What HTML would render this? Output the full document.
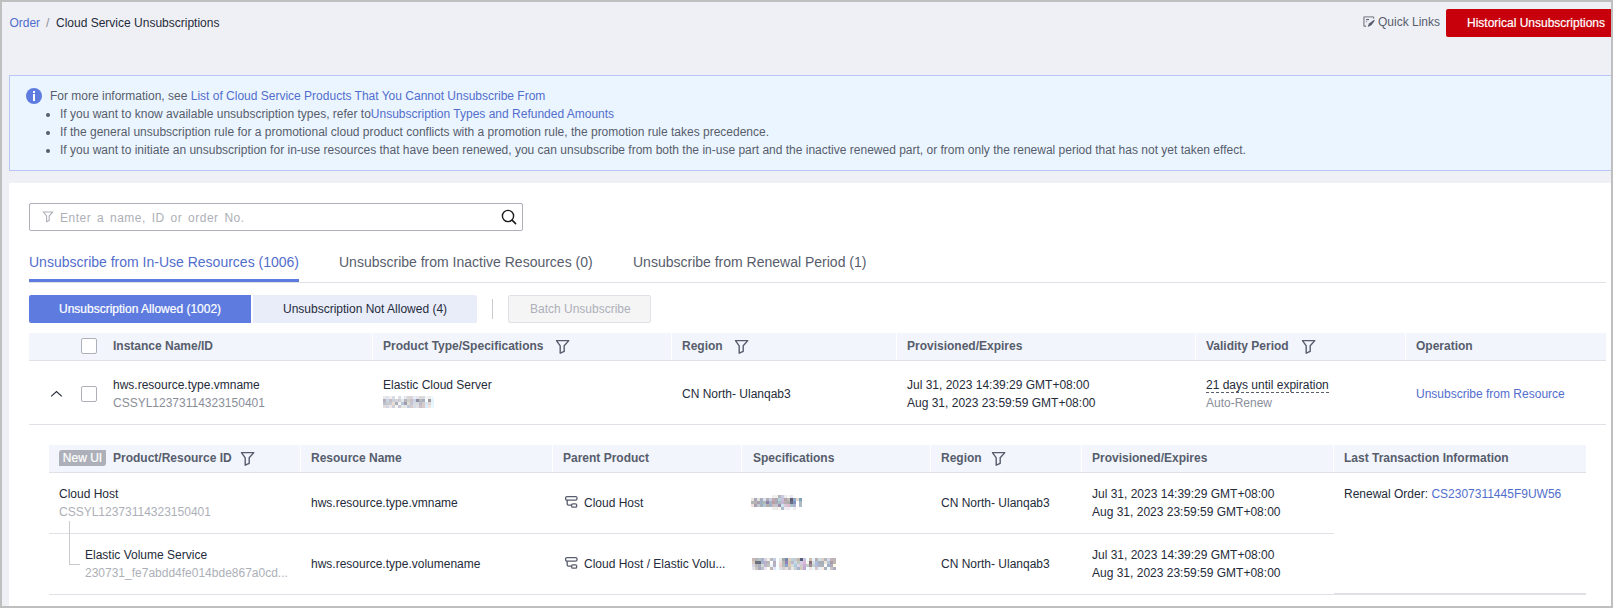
<!DOCTYPE html>
<html><head><meta charset="utf-8">
<style>
*{margin:0;padding:0;box-sizing:border-box}
html,body{width:1613px;height:608px;overflow:hidden;background:#bfbfbf}
body{font-family:"Liberation Sans",sans-serif;font-size:12px;color:#252b3a;position:relative}
.a{position:absolute;white-space:nowrap;line-height:18px}
#page{position:absolute;left:2px;top:2px;width:1609px;height:604px;background:#eff0f5;overflow:hidden}
.lnk{color:#526ecc}
.g{color:#575d6c}
.lg{color:#8a8e99}
.llg{color:#adb0b8}
.b{font-weight:bold}
svg{position:absolute;overflow:visible}
.hdr{position:absolute;background:#f2f5fc;border-bottom:1px solid #dfe1e6}
.sep{position:absolute;width:1px;background:#fff}
.hline{position:absolute;height:1px;background:#dfe1e6}
.cb{position:absolute;width:16px;height:16px;border:1px solid #adb0b8;border-radius:2px;background:#fff}
</style></head><body>
<div id="page"></div>

<!-- breadcrumb -->
<div class="a lnk" style="left:9.4px;top:14px">Order</div>
<div class="a lg" style="left:46px;top:14px">/</div>
<div class="a" style="left:56px;top:14px">Cloud Service Unsubscriptions</div>

<!-- quick links -->
<svg style="left:1362px;top:15px" width="14" height="13" viewBox="0 0 14 13">
 <path d="M11.6 3.8V2.5Q11.6 1.9 11 1.9H2.5Q1.9 1.9 1.9 2.5V10.6Q1.9 11.3 2.5 11.3H4.2" fill="none" stroke="#8a8e99" stroke-width="1.4"/>
 <path d="M4 4.6H7" stroke="#575d6c" stroke-width="1.1"/>
 <path d="M4.5 6.1V7.3" stroke="#8a8e99" stroke-width="1.1"/>
 <path d="M5.6 12L7 8.6L11.4 5.3Q12.9 4.4 12.7 5.7L9.4 10.2Z" fill="#575d6c"/>
</svg>
<div class="a g" style="left:1378px;top:13px">Quick Links</div>

<!-- red button -->
<div style="position:absolute;left:1446px;top:9px;width:180px;height:28px;background:#c7000b;border-radius:2px"></div>
<div class="a" style="left:1467px;top:14px;color:#fff;-webkit-text-stroke:0.2px #fff">Historical Unsubscriptions</div>

<!-- info box -->
<div style="position:absolute;left:9px;top:75px;width:1610px;height:96px;background:#ebf5ff;border:1px solid #b9c6f5"></div>
<div style="position:absolute;left:26px;top:88px;width:16px;height:16px;border-radius:50%;background:#5e7ce0"></div>
<div style="position:absolute;left:33px;top:91px;width:2px;height:2px;background:#fff"></div>
<div style="position:absolute;left:33px;top:94px;width:2px;height:7px;background:#fff"></div>
<div class="a g" style="left:50px;top:87px">For more information, see <span class="lnk">List of Cloud Service Products That You Cannot Unsubscribe From</span></div>
<div style="position:absolute;left:46px;top:113px;width:4px;height:4px;border-radius:50%;background:#575d6c"></div>
<div style="position:absolute;left:46px;top:131px;width:4px;height:4px;border-radius:50%;background:#575d6c"></div>
<div style="position:absolute;left:46px;top:149px;width:4px;height:4px;border-radius:50%;background:#575d6c"></div>
<div class="a g" style="left:60px;top:105px">If you want to know available unsubscription types, refer to<span class="lnk">Unsubscription Types and Refunded Amounts</span></div>
<div class="a g" style="left:60px;top:123px">If the general unsubscription rule for a promotional cloud product conflicts with a promotion rule, the promotion rule takes precedence.</div>
<div class="a g" style="left:60px;top:141px">If you want to initiate an unsubscription for in-use resources that have been renewed, you can unsubscribe from both the in-use part and the inactive renewed part, or from only the renewal period that has not yet taken effect.</div>

<!-- white panel -->
<div style="position:absolute;left:9px;top:183px;width:1602px;height:423px;background:#fff"></div>


<!-- search -->
<div style="position:absolute;left:29px;top:203px;width:494px;height:28px;border:1px solid #adb0b8;border-radius:2px;background:#fff"></div>
<svg style="left:42px;top:211px" width="12" height="12" viewBox="0 0 12 12">
 <path d="M1.2 1H10.8L7.2 4.8V9.4L4.6 10.8V4.8Z" fill="none" stroke="#adb0b8" stroke-width="1.1" stroke-linejoin="round"/>
</svg>
<div class="a llg" style="left:60px;top:209px;word-spacing:2px;letter-spacing:0.5px">Enter a name, ID or order No.</div>
<svg style="left:500px;top:208px" width="18" height="18" viewBox="0 0 18 18">
 <circle cx="8" cy="8" r="5.6" fill="none" stroke="#191919" stroke-width="1.4"/>
 <path d="M12.1 12.1L15.6 15.6" stroke="#191919" stroke-width="1.5" stroke-linecap="round"/>
</svg>

<!-- tabs -->
<div class="a" style="left:29px;top:252px;font-size:14px;line-height:20px;color:#526ecc">Unsubscribe from In-Use Resources (1006)</div>
<div class="a g" style="left:339px;top:252px;font-size:14px;line-height:20px">Unsubscribe from Inactive Resources (0)</div>
<div class="a g" style="left:633px;top:252px;font-size:14px;line-height:20px">Unsubscribe from Renewal Period (1)</div>
<div class="hline" style="left:29px;top:282px;width:1577px"></div>
<div style="position:absolute;left:29px;top:279px;width:270px;height:3px;background:#5e7ce0"></div>

<!-- segmented buttons -->
<div style="position:absolute;left:29px;top:295px;width:222px;height:28px;background:#5e7ce0;border-radius:2px 0 0 2px"></div>
<div class="a" style="left:59px;top:300px;color:#fff;width:162px;text-align:center;-webkit-text-stroke:0.2px #fff">Unsubscription Allowed (1002)</div>
<div style="position:absolute;left:253px;top:295px;width:224px;height:28px;background:#e9edfa;border-radius:0 2px 2px 0"></div>
<div class="a" style="left:283px;top:300px">Unsubscription Not Allowed (4)</div>
<div style="position:absolute;left:492px;top:299px;width:1px;height:20px;background:#c8cad0"></div>
<div style="position:absolute;left:508px;top:295px;width:143px;height:28px;background:#f5f5f6;border:1px solid #dfe1e6;border-radius:2px"></div>
<div class="a llg" style="left:530px;top:300px">Batch Unsubscribe</div>


<!-- main table header -->
<div class="hdr" style="left:29px;top:333px;width:1577px;height:28px"></div>
<div class="sep" style="left:372px;top:333px;height:27px"></div>
<div class="sep" style="left:671px;top:333px;height:27px"></div>
<div class="sep" style="left:896px;top:333px;height:27px"></div>
<div class="sep" style="left:1195px;top:333px;height:27px"></div>
<div class="sep" style="left:1405px;top:333px;height:27px"></div>
<div class="cb" style="left:81px;top:338px"></div>
<div class="a g b" style="left:113px;top:337px">Instance Name/ID</div>
<div class="a g b" style="left:383px;top:337px">Product Type/Specifications</div>
<svg class="flt" style="left:554px;top:339px" width="16" height="16" viewBox="0 0 16 16"><path d="M2.5 1.6H14.8L10.2 6.8V12.3L6.2 14.2V6.8Z" fill="none" stroke="#575d6c" stroke-width="1.4" stroke-linejoin="round"/></svg>
<div class="a g b" style="left:682px;top:337px">Region</div>
<svg class="flt" style="left:733px;top:339px" width="16" height="16" viewBox="0 0 16 16"><path d="M2.5 1.6H14.8L10.2 6.8V12.3L6.2 14.2V6.8Z" fill="none" stroke="#575d6c" stroke-width="1.4" stroke-linejoin="round"/></svg>
<div class="a g b" style="left:907px;top:337px">Provisioned/Expires</div>
<div class="a g b" style="left:1206px;top:337px">Validity Period</div>
<svg class="flt" style="left:1300px;top:339px" width="16" height="16" viewBox="0 0 16 16"><path d="M2.5 1.6H14.8L10.2 6.8V12.3L6.2 14.2V6.8Z" fill="none" stroke="#575d6c" stroke-width="1.4" stroke-linejoin="round"/></svg>
<div class="a g b" style="left:1416px;top:337px">Operation</div>

<!-- main row -->
<svg style="left:50px;top:390px" width="13" height="8" viewBox="0 0 13 8"><path d="M1.2 6.4L6.5 1.5L11.8 6.4" fill="none" stroke="#252b3a" stroke-width="1.1"/></svg>
<div class="cb" style="left:81px;top:386px"></div>
<div class="a" style="left:113px;top:376px">hws.resource.type.vmname</div>
<div class="a lg" style="left:113px;top:394px">CSSYL12373114323150401</div>
<div class="a" style="left:383px;top:376px">Elastic Cloud Server</div>
<svg style="left:383px;top:396px" width="51" height="12" shape-rendering="crispEdges"><rect x="0" y="0" width="3" height="3" fill="#ebe7e9"/><rect x="3" y="0" width="3" height="3" fill="#dfe3ed"/><rect x="6" y="0" width="3" height="3" fill="#f7efee"/><rect x="9" y="0" width="3" height="3" fill="#d7dde8"/><rect x="12" y="0" width="3" height="3" fill="#fdfdf9"/><rect x="15" y="0" width="3" height="3" fill="#dedce4"/><rect x="18" y="0" width="3" height="3" fill="#f5faff"/><rect x="21" y="0" width="3" height="3" fill="#e8e6ed"/><rect x="24" y="0" width="3" height="3" fill="#d9d5d8"/><rect x="27" y="0" width="3" height="3" fill="#d9d5d8"/><rect x="30" y="0" width="3" height="3" fill="#e6eefb"/><rect x="33" y="0" width="3" height="3" fill="#e6e5ee"/><rect x="36" y="0" width="3" height="3" fill="#dedad9"/><rect x="39" y="0" width="3" height="3" fill="#d8d8dd"/><rect x="42" y="0" width="3" height="3" fill="#f2f5fc"/><rect x="45" y="0" width="3" height="3" fill="#f0eceb"/><rect x="48" y="0" width="3" height="3" fill="#f2fbff"/><rect x="0" y="3" width="3" height="3" fill="#b4b1ba"/><rect x="3" y="3" width="3" height="3" fill="#ccd6e5"/><rect x="6" y="3" width="3" height="3" fill="#c3bfc4"/><rect x="9" y="3" width="3" height="3" fill="#ccd2dc"/><rect x="12" y="3" width="3" height="3" fill="#d6d4d8"/><rect x="15" y="3" width="3" height="3" fill="#cfcdd6"/><rect x="18" y="3" width="3" height="3" fill="#e3e7ec"/><rect x="21" y="3" width="3" height="3" fill="#b7b5c0"/><rect x="24" y="3" width="3" height="3" fill="#ccd0c9"/><rect x="27" y="3" width="3" height="3" fill="#cbc1c9"/><rect x="30" y="3" width="3" height="3" fill="#ccd3e0"/><rect x="33" y="3" width="3" height="3" fill="#8e8ea0"/><rect x="36" y="3" width="3" height="3" fill="#b4b9bf"/><rect x="39" y="3" width="3" height="3" fill="#a8b1c2"/><rect x="42" y="3" width="3" height="3" fill="#fbfbfb"/><rect x="45" y="3" width="3" height="3" fill="#9c989c"/><rect x="48" y="3" width="3" height="3" fill="#e5f5ff"/><rect x="0" y="6" width="3" height="3" fill="#bcc1d2"/><rect x="3" y="6" width="3" height="3" fill="#c8cbd0"/><rect x="6" y="6" width="3" height="3" fill="#c7cdd2"/><rect x="9" y="6" width="3" height="3" fill="#eadbcc"/><rect x="12" y="6" width="3" height="3" fill="#a8adc0"/><rect x="15" y="6" width="3" height="3" fill="#f2f5ef"/><rect x="18" y="6" width="3" height="3" fill="#b8c5d8"/><rect x="21" y="6" width="3" height="3" fill="#9b9dae"/><rect x="24" y="6" width="3" height="3" fill="#e0dcd3"/><rect x="27" y="6" width="3" height="3" fill="#c5c3d6"/><rect x="30" y="6" width="3" height="3" fill="#d7dbe6"/><rect x="33" y="6" width="3" height="3" fill="#d5dadf"/><rect x="36" y="6" width="3" height="3" fill="#bcbac6"/><rect x="39" y="6" width="3" height="3" fill="#d9ccc9"/><rect x="42" y="6" width="3" height="3" fill="#d5e6f9"/><rect x="45" y="6" width="3" height="3" fill="#e3d6d3"/><rect x="48" y="6" width="3" height="3" fill="#e6f6ff"/><rect x="0" y="9" width="3" height="3" fill="#e3dad9"/><rect x="3" y="9" width="3" height="3" fill="#d2d9e4"/><rect x="6" y="9" width="3" height="3" fill="#efe7e7"/><rect x="9" y="9" width="3" height="3" fill="#cfcfdd"/><rect x="12" y="9" width="3" height="3" fill="#f4f7f0"/><rect x="15" y="9" width="3" height="3" fill="#cbc7d9"/><rect x="18" y="9" width="3" height="3" fill="#e4e6e1"/><rect x="21" y="9" width="3" height="3" fill="#e6e6e8"/><rect x="24" y="9" width="3" height="3" fill="#c1cbdb"/><rect x="27" y="9" width="3" height="3" fill="#d8ccc9"/><rect x="30" y="9" width="3" height="3" fill="#d7dbe6"/><rect x="33" y="9" width="3" height="3" fill="#e0e0e5"/><rect x="36" y="9" width="3" height="3" fill="#c8c1c7"/><rect x="39" y="9" width="3" height="3" fill="#d6cacb"/><rect x="42" y="9" width="3" height="3" fill="#dcebfb"/><rect x="45" y="9" width="3" height="3" fill="#ede3df"/><rect x="48" y="9" width="3" height="3" fill="#ecf8ff"/></svg>
<div class="a" style="left:682px;top:385px">CN North- Ulanqab3</div>
<div class="a" style="left:907px;top:376px">Jul 31, 2023 14:39:29 GMT+08:00</div>
<div class="a" style="left:907px;top:394px">Aug 31, 2023 23:59:59 GMT+08:00</div>
<div class="a" style="left:1206px;top:376px">21 days until expiration</div>
<div style="position:absolute;left:1206px;top:392px;width:123px;height:1px;background:repeating-linear-gradient(90deg,#575d6c 0 3px,transparent 3px 5px)"></div>
<div class="a lg" style="left:1206px;top:394px">Auto-Renew</div>
<div class="a lnk" style="left:1416px;top:385px">Unsubscribe from Resource</div>
<div class="hline" style="left:29px;top:424px;width:1577px"></div>


<!-- sub table header -->
<div class="hdr" style="left:49px;top:445px;width:1537px;height:28px"></div>
<div class="sep" style="left:300px;top:445px;height:27px"></div>
<div class="sep" style="left:552px;top:445px;height:27px"></div>
<div class="sep" style="left:741px;top:445px;height:27px"></div>
<div class="sep" style="left:930px;top:445px;height:27px"></div>
<div class="sep" style="left:1081px;top:445px;height:27px"></div>
<div class="sep" style="left:1333px;top:445px;height:27px"></div>
<div style="position:absolute;left:59px;top:450px;width:47px;height:16px;background:#adb0b8;border-radius:3px 0 3px 0"></div>
<div class="a" style="left:59px;top:449px;width:47px;text-align:center;color:#fff;-webkit-text-stroke:0.2px #fff">New UI</div>
<div class="a g b" style="left:113px;top:449px">Product/Resource ID</div>
<svg style="left:239px;top:451px" width="16" height="16" viewBox="0 0 16 16"><path d="M2.5 1.6H14.8L10.2 6.8V12.3L6.2 14.2V6.8Z" fill="none" stroke="#575d6c" stroke-width="1.4" stroke-linejoin="round"/></svg>
<div class="a g b" style="left:311px;top:449px">Resource Name</div>
<div class="a g b" style="left:563px;top:449px">Parent Product</div>
<div class="a g b" style="left:753px;top:449px">Specifications</div>
<div class="a g b" style="left:941px;top:449px">Region</div>
<svg style="left:990px;top:451px" width="16" height="16" viewBox="0 0 16 16"><path d="M2.5 1.6H14.8L10.2 6.8V12.3L6.2 14.2V6.8Z" fill="none" stroke="#575d6c" stroke-width="1.4" stroke-linejoin="round"/></svg>
<div class="a g b" style="left:1092px;top:449px">Provisioned/Expires</div>
<div class="a g b" style="left:1344px;top:449px">Last Transaction Information</div>

<!-- sub row 1 -->
<div class="a" style="left:59px;top:485px">Cloud Host</div>
<div class="a llg" style="left:59px;top:503px">CSSYL12373114323150401</div>
<div class="a" style="left:311px;top:494px">hws.resource.type.vmname</div>
<svg style="left:564px;top:495px" width="14" height="14" viewBox="0 0 14 14"><g fill="none" stroke="#575d6c" stroke-width="1.3"><rect x="1.6" y="1.6" width="11.4" height="3.5" rx="1.3"/><rect x="7.6" y="8.8" width="5.1" height="3.35" rx="1.2"/><path d="M3.2 5.1V9Q3.2 10.1 4.3 10.1H7.6"/></g></svg>
<div class="a" style="left:584px;top:494px">Cloud Host</div>
<svg style="left:751px;top:495px" width="51" height="15" shape-rendering="crispEdges"><rect x="21" y="0" width="3" height="3" fill="#f0eef2"/><rect x="24" y="0" width="3" height="3" fill="#f2f1ec"/><rect x="27" y="0" width="3" height="3" fill="#b4b5bd"/><rect x="30" y="0" width="3" height="3" fill="#c7cde0"/><rect x="33" y="0" width="3" height="3" fill="#efeaf0"/><rect x="36" y="0" width="3" height="3" fill="#f8faf5"/><rect x="39" y="0" width="3" height="3" fill="#e8e6ef"/><rect x="0" y="3" width="3" height="3" fill="#eee3da"/><rect x="3" y="3" width="3" height="3" fill="#a9a7bd"/><rect x="6" y="3" width="3" height="3" fill="#dfe3dc"/><rect x="9" y="3" width="3" height="3" fill="#a9aebe"/><rect x="12" y="3" width="3" height="3" fill="#d9e2ee"/><rect x="15" y="3" width="3" height="3" fill="#b7aeb1"/><rect x="18" y="3" width="3" height="3" fill="#c5cce3"/><rect x="21" y="3" width="3" height="3" fill="#c2a9ad"/><rect x="24" y="3" width="3" height="3" fill="#acabb5"/><rect x="27" y="3" width="3" height="3" fill="#b4d3df"/><rect x="30" y="3" width="3" height="3" fill="#cbbcd8"/><rect x="33" y="3" width="3" height="3" fill="#b4a6ac"/><rect x="36" y="3" width="3" height="3" fill="#bdbdba"/><rect x="39" y="3" width="3" height="3" fill="#5f5d75"/><rect x="42" y="3" width="3" height="3" fill="#94a8c9"/><rect x="45" y="3" width="3" height="3" fill="#e6dad0"/><rect x="48" y="3" width="3" height="3" fill="#7ea2b6"/><rect x="0" y="6" width="3" height="3" fill="#b0b6b1"/><rect x="3" y="6" width="3" height="3" fill="#b8b1b2"/><rect x="6" y="6" width="3" height="3" fill="#a99fae"/><rect x="9" y="6" width="3" height="3" fill="#9fb2c1"/><rect x="12" y="6" width="3" height="3" fill="#aebab6"/><rect x="15" y="6" width="3" height="3" fill="#8a80ac"/><rect x="18" y="6" width="3" height="3" fill="#a6b2c4"/><rect x="21" y="6" width="3" height="3" fill="#bb9ea3"/><rect x="24" y="6" width="3" height="3" fill="#a8a8b8"/><rect x="27" y="6" width="3" height="3" fill="#a9bcc4"/><rect x="30" y="6" width="3" height="3" fill="#c4b4d6"/><rect x="33" y="6" width="3" height="3" fill="#b9aeb1"/><rect x="36" y="6" width="3" height="3" fill="#aeabaf"/><rect x="39" y="6" width="3" height="3" fill="#6a6b84"/><rect x="42" y="6" width="3" height="3" fill="#7f97bc"/><rect x="45" y="6" width="3" height="3" fill="#ffffff"/><rect x="48" y="6" width="3" height="3" fill="#aabac0"/><rect x="0" y="9" width="3" height="3" fill="#efdfd9"/><rect x="3" y="9" width="3" height="3" fill="#a89fb0"/><rect x="6" y="9" width="3" height="3" fill="#c5c7d0"/><rect x="9" y="9" width="3" height="3" fill="#a4afb9"/><rect x="12" y="9" width="3" height="3" fill="#b4c7db"/><rect x="15" y="9" width="3" height="3" fill="#b8b0a7"/><rect x="18" y="9" width="3" height="3" fill="#a1b1c5"/><rect x="21" y="9" width="3" height="3" fill="#cdbcbe"/><rect x="24" y="9" width="3" height="3" fill="#c4c3d1"/><rect x="27" y="9" width="3" height="3" fill="#9c8cae"/><rect x="30" y="9" width="3" height="3" fill="#cbe6ea"/><rect x="33" y="9" width="3" height="3" fill="#d6c9dc"/><rect x="36" y="9" width="3" height="3" fill="#ddbbcc"/><rect x="39" y="9" width="3" height="3" fill="#aabfc6"/><rect x="42" y="9" width="3" height="3" fill="#aeb5cc"/><rect x="45" y="9" width="3" height="3" fill="#ffffff"/><rect x="48" y="9" width="3" height="3" fill="#a9bdc3"/><rect x="21" y="12" width="3" height="3" fill="#eeeeef"/><rect x="24" y="12" width="3" height="3" fill="#ececea"/><rect x="27" y="12" width="3" height="3" fill="#fbf7ee"/><rect x="30" y="12" width="3" height="3" fill="#adbdd0"/><rect x="33" y="12" width="3" height="3" fill="#f1eef2"/><rect x="36" y="12" width="3" height="3" fill="#efe9f2"/><rect x="39" y="12" width="3" height="3" fill="#f7fdff"/><rect x="42" y="12" width="3" height="3" fill="#ededf0"/></svg>
<div class="a" style="left:941px;top:494px">CN North- Ulanqab3</div>
<div class="a" style="left:1092px;top:485px">Jul 31, 2023 14:39:29 GMT+08:00</div>
<div class="a" style="left:1092px;top:503px">Aug 31, 2023 23:59:59 GMT+08:00</div>
<div class="a" style="left:1344px;top:485px">Renewal Order: <span class="lnk">CS2307311445F9UW56</span></div>
<div class="hline" style="left:49px;top:533px;width:1285px"></div>

<!-- tree line -->
<div style="position:absolute;left:69px;top:521px;width:1px;height:44px;background:#c8cad0"></div>
<div style="position:absolute;left:69px;top:564px;width:11px;height:1px;background:#c8cad0"></div>

<!-- sub row 2 -->
<div class="a" style="left:85px;top:546px">Elastic Volume Service</div>
<div class="a llg" style="left:85px;top:564px">230731_fe7abdd4fe014bde867a0cd...</div>
<div class="a" style="left:311px;top:555px">hws.resource.type.volumename</div>
<svg style="left:564px;top:556px" width="14" height="14" viewBox="0 0 14 14"><g fill="none" stroke="#575d6c" stroke-width="1.3"><rect x="1.6" y="1.6" width="11.4" height="3.5" rx="1.3"/><rect x="7.6" y="8.8" width="5.1" height="3.35" rx="1.2"/><path d="M3.2 5.1V9Q3.2 10.1 4.3 10.1H7.6"/></g></svg>
<div class="a" style="left:584px;top:555px">Cloud Host / Elastic Volu...</div>
<svg style="left:752px;top:558px" width="84" height="12" shape-rendering="crispEdges"><rect x="0" y="0" width="3" height="3" fill="#c9b9b9"/><rect x="3" y="0" width="3" height="3" fill="#b4b6b4"/><rect x="6" y="0" width="3" height="3" fill="#b9c0c6"/><rect x="9" y="0" width="3" height="3" fill="#a9b3c9"/><rect x="12" y="0" width="3" height="3" fill="#dad3e4"/><rect x="15" y="0" width="3" height="3" fill="#f6ece6"/><rect x="18" y="0" width="3" height="3" fill="#b7bbc4"/><rect x="21" y="0" width="3" height="3" fill="#c4cde2"/><rect x="24" y="0" width="3" height="3" fill="#fcffff"/><rect x="27" y="0" width="3" height="3" fill="#e6e9e6"/><rect x="30" y="0" width="3" height="3" fill="#a3a8a8"/><rect x="33" y="0" width="3" height="3" fill="#7487b0"/><rect x="36" y="0" width="3" height="3" fill="#dfcdb8"/><rect x="39" y="0" width="3" height="3" fill="#bdd3dc"/><rect x="42" y="0" width="3" height="3" fill="#c9c9d1"/><rect x="45" y="0" width="3" height="3" fill="#c0b8ae"/><rect x="48" y="0" width="3" height="3" fill="#575e79"/><rect x="51" y="0" width="3" height="3" fill="#c9c6e0"/><rect x="54" y="0" width="3" height="3" fill="#f4ffff"/><rect x="57" y="0" width="3" height="3" fill="#d5bfae"/><rect x="60" y="0" width="3" height="3" fill="#e3f3ff"/><rect x="63" y="0" width="3" height="3" fill="#bdaeae"/><rect x="66" y="0" width="3" height="3" fill="#cddfea"/><rect x="69" y="0" width="3" height="3" fill="#dccfcc"/><rect x="72" y="0" width="3" height="3" fill="#b3b6b8"/><rect x="75" y="0" width="3" height="3" fill="#d8d9ef"/><rect x="78" y="0" width="3" height="3" fill="#bfb3b3"/><rect x="81" y="0" width="3" height="3" fill="#bdb4b9"/><rect x="0" y="3" width="3" height="3" fill="#dbc8bf"/><rect x="3" y="3" width="3" height="3" fill="#6b6f7c"/><rect x="6" y="3" width="3" height="3" fill="#6b6f7c"/><rect x="9" y="3" width="3" height="3" fill="#a4b6cf"/><rect x="12" y="3" width="3" height="3" fill="#bdafc8"/><rect x="15" y="3" width="3" height="3" fill="#b5bab8"/><rect x="18" y="3" width="3" height="3" fill="#fefefe"/><rect x="21" y="3" width="3" height="3" fill="#b6aebe"/><rect x="24" y="3" width="3" height="3" fill="#f8ffff"/><rect x="27" y="3" width="3" height="3" fill="#e6ddd6"/><rect x="30" y="3" width="3" height="3" fill="#b5bab7"/><rect x="33" y="3" width="3" height="3" fill="#8e84b8"/><rect x="36" y="3" width="3" height="3" fill="#d5c7b3"/><rect x="39" y="3" width="3" height="3" fill="#b4bccc"/><rect x="42" y="3" width="3" height="3" fill="#ccd6e2"/><rect x="45" y="3" width="3" height="3" fill="#bec7be"/><rect x="48" y="3" width="3" height="3" fill="#d2cce8"/><rect x="51" y="3" width="3" height="3" fill="#ddb8d3"/><rect x="54" y="3" width="3" height="3" fill="#f2f8f0"/><rect x="57" y="3" width="3" height="3" fill="#8b6f79"/><rect x="60" y="3" width="3" height="3" fill="#d9e0e2"/><rect x="63" y="3" width="3" height="3" fill="#a8bde2"/><rect x="66" y="3" width="3" height="3" fill="#a8aeb6"/><rect x="69" y="3" width="3" height="3" fill="#a8afb4"/><rect x="72" y="3" width="3" height="3" fill="#ece2d8"/><rect x="75" y="3" width="3" height="3" fill="#b6c6d4"/><rect x="78" y="3" width="3" height="3" fill="#ab9ba6"/><rect x="81" y="3" width="3" height="3" fill="#bdb5b0"/><rect x="0" y="6" width="3" height="3" fill="#d7d6e5"/><rect x="3" y="6" width="3" height="3" fill="#bdbab5"/><rect x="6" y="6" width="3" height="3" fill="#a8adc0"/><rect x="9" y="6" width="3" height="3" fill="#d3d8d4"/><rect x="12" y="6" width="3" height="3" fill="#bcb3cd"/><rect x="15" y="6" width="3" height="3" fill="#c3c2bf"/><rect x="18" y="6" width="3" height="3" fill="#eaf5ff"/><rect x="21" y="6" width="3" height="3" fill="#b5b2c3"/><rect x="24" y="6" width="3" height="3" fill="#f4ffff"/><rect x="27" y="6" width="3" height="3" fill="#eecfd0"/><rect x="30" y="6" width="3" height="3" fill="#b8bdb8"/><rect x="33" y="6" width="3" height="3" fill="#8ba3cc"/><rect x="36" y="6" width="3" height="3" fill="#ddc9b4"/><rect x="39" y="6" width="3" height="3" fill="#d7dadb"/><rect x="42" y="6" width="3" height="3" fill="#a8cde2"/><rect x="45" y="6" width="3" height="3" fill="#ddd3e3"/><rect x="48" y="6" width="3" height="3" fill="#cfcccc"/><rect x="51" y="6" width="3" height="3" fill="#c9acd8"/><rect x="54" y="6" width="3" height="3" fill="#c3cbc8"/><rect x="57" y="6" width="3" height="3" fill="#a38e97"/><rect x="60" y="6" width="3" height="3" fill="#c6d2d2"/><rect x="63" y="6" width="3" height="3" fill="#b8bade"/><rect x="66" y="6" width="3" height="3" fill="#b0b5bd"/><rect x="69" y="6" width="3" height="3" fill="#a9b3be"/><rect x="72" y="6" width="3" height="3" fill="#fcfdff"/><rect x="75" y="6" width="3" height="3" fill="#a4b1c2"/><rect x="78" y="6" width="3" height="3" fill="#aeaac0"/><rect x="81" y="6" width="3" height="3" fill="#fff7de"/><rect x="0" y="9" width="3" height="3" fill="#e6e4ec"/><rect x="3" y="9" width="3" height="3" fill="#ccc8c1"/><rect x="6" y="9" width="3" height="3" fill="#ada8b9"/><rect x="9" y="9" width="3" height="3" fill="#b7c1d0"/><rect x="12" y="9" width="3" height="3" fill="#f0e9f0"/><rect x="15" y="9" width="3" height="3" fill="#fefefe"/><rect x="18" y="9" width="3" height="3" fill="#c1b6b4"/><rect x="21" y="9" width="3" height="3" fill="#e2e6fb"/><rect x="24" y="9" width="3" height="3" fill="#f4ffff"/><rect x="27" y="9" width="3" height="3" fill="#dfe2e1"/><rect x="30" y="9" width="3" height="3" fill="#d0cfd6"/><rect x="33" y="9" width="3" height="3" fill="#e5ddd8"/><rect x="36" y="9" width="3" height="3" fill="#c4c0c6"/><rect x="39" y="9" width="3" height="3" fill="#e8e9e6"/><rect x="42" y="9" width="3" height="3" fill="#c3cfd3"/><rect x="45" y="9" width="3" height="3" fill="#a9b2cd"/><rect x="48" y="9" width="3" height="3" fill="#d3cac0"/><rect x="51" y="9" width="3" height="3" fill="#bfa8d3"/><rect x="54" y="9" width="3" height="3" fill="#f2ffff"/><rect x="57" y="9" width="3" height="3" fill="#f2e6e3"/><rect x="60" y="9" width="3" height="3" fill="#effaff"/><rect x="63" y="9" width="3" height="3" fill="#d5c8c6"/><rect x="66" y="9" width="3" height="3" fill="#e6f3ff"/><rect x="69" y="9" width="3" height="3" fill="#fbede0"/><rect x="72" y="9" width="3" height="3" fill="#acafb8"/><rect x="75" y="9" width="3" height="3" fill="#effaff"/><rect x="78" y="9" width="3" height="3" fill="#cfc4c4"/><rect x="81" y="9" width="3" height="3" fill="#a9acc0"/></svg>
<div class="a" style="left:941px;top:555px">CN North- Ulanqab3</div>
<div class="a" style="left:1092px;top:546px">Jul 31, 2023 14:39:29 GMT+08:00</div>
<div class="a" style="left:1092px;top:564px">Aug 31, 2023 23:59:59 GMT+08:00</div>
<div class="hline" style="left:49px;top:594px;width:1537px"></div>
<div class="hline" style="left:1334px;top:593px;width:252px"></div>

<!-- frame -->
<div style="position:absolute;left:0;top:0;width:1613px;height:2px;background:#bfbfbf"></div>
<div style="position:absolute;left:0;top:0;width:2px;height:608px;background:#bfbfbf"></div>
<div style="position:absolute;left:1611px;top:0;width:2px;height:608px;background:#bfbfbf"></div>
<div style="position:absolute;left:0;top:606px;width:1613px;height:2px;background:#bfbfbf"></div>

</body></html>
